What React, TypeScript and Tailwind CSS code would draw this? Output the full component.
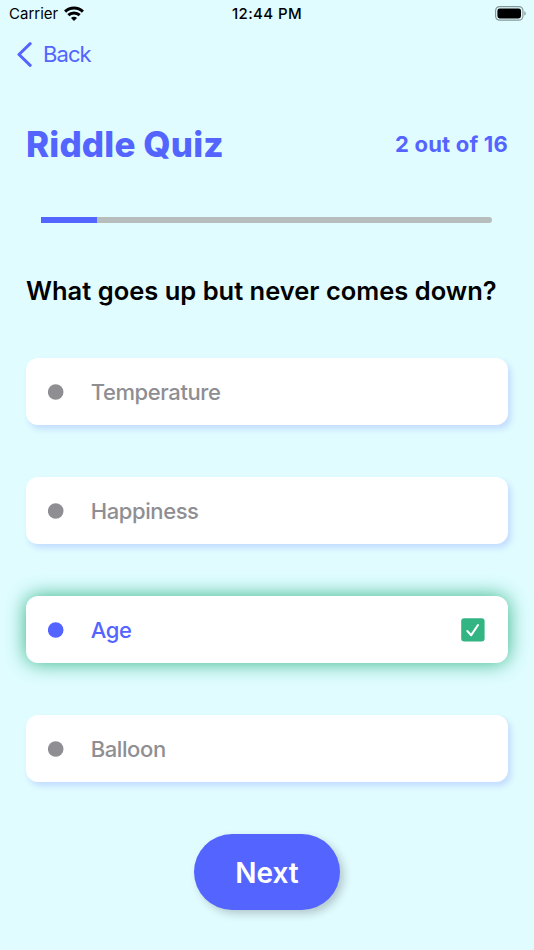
import clsx from 'clsx'

type OptionRowProps = {
  label: string
  correct?: boolean
}

const options: OptionRowProps[] = [
  { label: 'Temperature' },
  { label: 'Happiness' },
  { label: 'Age', correct: true },
  { label: 'Balloon' },
]

const WifiIcon = () => (
  <svg viewBox="0 0 20 15" className="mb-0.5 ml-1.5 h-[15px] w-5" fill="none" stroke="#000" strokeWidth="3">
    <path d="M1.1 5.6a12.8 12.8 0 0 1 17.8 0" />
    <path d="M4.3 9.2a8.2 8.2 0 0 1 11.4 0" />
    <path d="M10 14.9 7 12a4.2 4.2 0 0 1 6 0Z" fill="#000" stroke="none" />
  </svg>
)

const BatteryIcon = () => (
  <svg viewBox="0 0 32 15" className="mb-0.5 h-[15px] w-8" fill="none">
    <rect x="0.6" y="0.6" width="27.3" height="13.6" rx="4" stroke="#000" strokeOpacity="0.4" strokeWidth="1.2" />
    <rect x="2.4" y="2.4" width="23.6" height="10" rx="2.3" fill="#000" />
    <path d="M29.3 5.2c1.9.7 1.9 3.7 0 4.4Z" fill="#000" fillOpacity="0.4" />
  </svg>
)

const StatusBar = () => (
  <div className="grid h-7 grid-cols-3 items-center px-[9px] text-[15px]">
    <div className="flex items-center">
      <span>Carrier</span>
      <WifiIcon />
    </div>
    <span className="text-center font-medium tracking-[0.4px]">12:44 PM</span>
    <div className="-mr-0.5 flex justify-end">
      <BatteryIcon />
    </div>
  </div>
)

const OptionRow = ({ label, correct }: OptionRowProps) => (
  <button
    className={clsx(
      'flex h-[67.3px] w-full items-center rounded-xl bg-white px-[22px] text-[22px] font-medium tracking-[-0.4px]',
      correct
        ? 'text-[#5464ff] shadow-[0_0_20px_#33b483]'
        : 'text-[#8e8e93] shadow-[3px_4px_6px_#c2dcff]'
    )}
  >
    <svg viewBox="0 0 16 16" className="size-4" fill="currentColor">
      <circle cx="7.7" cy="8" r="7.8" />
    </svg>
    <span className="ml-[26.7px] flex-1 pt-[1.5px] text-left">{label}</span>
    {correct && (
      <svg viewBox="0 0 24 24" className="mr-px size-6">
        <rect x="0.2" y="0.2" width="23.4" height="23.4" rx="3" fill="#33b483" />
        <path d="M6.4 13.1 10.2 17.2 17 7" fill="none" stroke="#fff" strokeWidth="2.1" strokeLinecap="round" strokeLinejoin="round" />
      </svg>
    )}
  </button>
)

const App = () => {
  return (
    <div className="h-[950px] w-[534px] overflow-hidden bg-[#e0fcff] font-['Inter','Liberation_Sans',sans-serif] text-black">
      <StatusBar />
      <button className="ml-[17px] flex h-[53px] items-center text-[22px] tracking-[-0.9px] text-[#5464ff]">
        <svg viewBox="0 0 15 25" className="mr-[11px] h-[25px] w-[15px]" fill="none" stroke="currentColor" strokeWidth="3" strokeLinecap="round" strokeLinejoin="round">
          <path d="M13.2 1.7 2 12.5l11.2 10.8" />
        </svg>
        Back
      </button>
      <main className="px-[26px]">
        <div className="mt-[41px] flex h-11 items-center justify-between text-[#5464ff]">
          <h1 className="text-[35px] font-extrabold tracking-[0.15px]">Riddle Quiz</h1>
          <p className="text-[22px] font-bold tracking-[0.2px]">2 out of 16</p>
        </div>
        <div className="mr-4 ml-[15px] mt-[51px] h-[5.7px] overflow-hidden rounded-r-full bg-[#b7bdbc]">
          <div className="h-full w-1/8 bg-[#5464ff]" />
        </div>
        <h2 className="mt-[48px] whitespace-nowrap text-[25.5px] leading-10 font-semibold">
          What goes up but never comes down?
        </h2>
        <div className="mt-[47.2px] flex flex-col gap-[51.8px]">
          {options.map((option) => (
            <OptionRow key={option.label} {...option} />
          ))}
        </div>
        <button className="mx-auto mt-[51.7px] block h-[76px] w-[146.5px] rounded-full bg-[#5464ff] pt-px text-[28px] font-semibold text-white shadow-[4px_4px_8px_rgba(0,0,0,0.2)]">
          Next
        </button>
      </main>
    </div>
  )
}

export default App
